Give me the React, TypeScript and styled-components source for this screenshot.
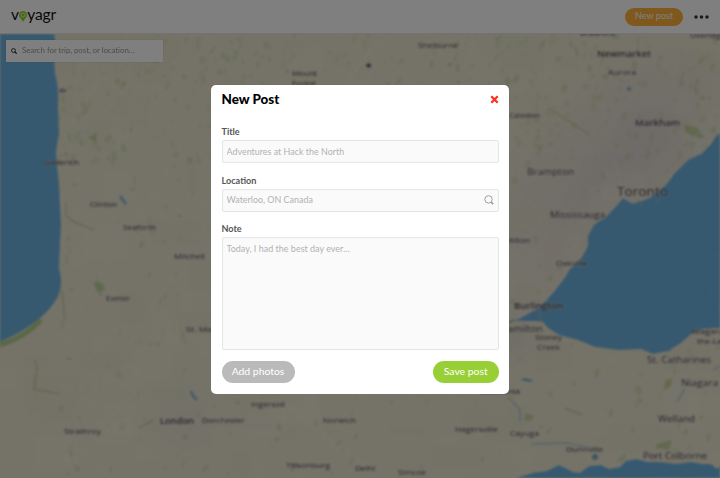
import React from 'react';
import styled, { createGlobalStyle } from 'styled-components';

const GlobalStyle = createGlobalStyle`
  * { box-sizing: border-box; }
  html, body { margin: 0; overflow: hidden; }
  body, button, input, textarea { font-family: Lato, "Open Sans", sans-serif; }
`;

const Page = styled.div`
  position: relative;
  display: flex;
  flex-direction: column;
  width: 720px;
  height: 478px;
  overflow: hidden;
  background: #fff;
`;

const TopBar = styled.header`
  display: flex;
  align-items: center;
  justify-content: space-between;
  flex: none;
  height: 34px;
  padding: 0 11px;
  background: #fff;
  border-bottom: 1px solid #e4e4e4;
`;

const Logo = styled.div`
  display: flex;
  align-items: baseline;
  height: 21px;
  font-size: 15.5px;
  line-height: 17px;
  letter-spacing: -0.15px;
  color: #111;
  svg { width: 8px; height: 11px; align-self: flex-start; margin: 5px 0.5px 0 0; }
`;

const Actions = styled.div`
  display: flex;
  align-items: center;
  gap: 11px;
  svg { width: 15px; height: 4px; }
`;

const NewPost = styled.button`
  width: 58px;
  height: 18px;
  padding: 0 0 2px;
  border: 0;
  border-radius: 9px;
  background: #ffb03a;
  color: #fff;
  font-size: 9px;
  line-height: 16px;
`;

const MapArea = styled.main`
  position: relative;
  flex: 1;
  overflow: hidden;
`;

const MapDrawing = styled.svg`
  display: block;
  width: 720px;
  height: 444px;
`;

const MapSearch = styled.div`
  position: absolute;
  top: 6px;
  left: 6px;
  display: flex;
  align-items: center;
  gap: 5px;
  width: 157px;
  height: 22px;
  padding: 0 5px;
  background: #fff;
  box-shadow: 0 0 1px rgba(0, 0, 0, 0.2);
  svg { width: 6px; height: 6px; flex: none; }
`;

const SearchInput = styled.input`
  flex: 1;
  min-width: 0;
  padding: 0 0 2px;
  border: 0;
  outline: 0;
  background: transparent;
  font-size: 8px;
  letter-spacing: -0.1px;
  &::placeholder { color: #999; opacity: 1; }
`;

const Overlay = styled.div`
  position: absolute;
  inset: 0;
  display: flex;
  align-items: center;
  justify-content: center;
  background: rgba(0, 0, 0, 0.5);
`;

const Dialog = styled.section`
  display: flex;
  flex-direction: column;
  width: 298px;
  height: 309px;
  padding: 6px 10.5px 10.5px;
  border-radius: 5px;
  background: #fff;
`;

const DialogHeader = styled.header`
  display: flex;
  align-items: center;
  justify-content: space-between;
  height: 17px;
  margin-bottom: 18.5px;
  svg { display: block; width: 9px; height: 9px; }
`;

const Title = styled.h1`
  margin: 0;
  font-size: 13.4px;
  line-height: 17px;
  font-weight: 900;
  color: #000;
`;

const Close = styled.button`
  padding: 0;
  border: 0;
  background: none;
`;

const Field = styled.label`
  display: flex;
  flex-direction: column;
  gap: 2px;
  margin-bottom: 11.5px;
`;

const FieldName = styled.span`
  font-size: 9.1px;
  line-height: 12px;
  font-weight: 700;
  color: #55565a;
`;

const FieldBox = styled.span<{ $tall?: boolean }>`
  display: flex;
  align-items: center;
  height: ${({ $tall }) => ($tall ? 112.5 : 23)}px;
  padding: ${({ $tall }) => ($tall ? '5px 4px' : '0 4px')};
  border: 1px solid #e5e5e5;
  border-radius: 2px;
  background: #fafafa;
  svg { flex: none; width: 10px; height: 10px; }
`;

const TextInput = styled.input`
  flex: 1;
  min-width: 0;
  padding: 0 0 1px;
  border: 0;
  outline: 0;
  background: transparent;
  font-size: 8.95px;
  &::placeholder { color: #b2b2b2; opacity: 1; }
`;

const TextArea = styled.textarea`
  flex: 1;
  height: 100%;
  padding: 0;
  border: 0;
  outline: 0;
  resize: none;
  background: transparent;
  font-size: 9px;
  line-height: 11px;
  &::placeholder { color: #b2b2b2; opacity: 1; }
`;

const Buttons = styled.footer`
  display: flex;
  justify-content: space-between;
  margin-top: -0.5px;
`;

const Pill = styled.button<{ $primary?: boolean }>`
  width: ${({ $primary }) => ($primary ? 65.5 : 73)}px;
  height: 22.5px;
  padding: 0 0 1px;
  border: 0;
  border-radius: 12px;
  background: ${({ $primary }) => ($primary ? '#99cf36' : '#bababa')};
  color: #fff;
  font-size: 10.4px;
`;

// Small seeded generator so that the terrain is the same on every render.
function seeded(seed: number) {
  let s = seed;
  return () => {
    s = (s * 1664525 + 1013904223) % 4294967296;
    return s / 4294967296;
  };
}

const rand = seeded(41);
const woods = Array.from({ length: 900 }, () => {
  const north = rand() < 0.5;
  return {
    x: 55 + rand() * 665,
    y: 34 + rand() * (north ? 130 : 440),
    rx: 0.7 + rand() * 2.2,
    ry: 1 + rand() * 4,
    a: rand() * 60 - 20,
    o: 0.08 + rand() * 0.32,
  };
});
const fields = Array.from({ length: 180 }, () => ({
  x: rand() * 720,
  y: 34 + rand() * 440,
  w: 10 + rand() * 40,
  h: 8 + rand() * 30,
  light: rand() > 0.5,
}));
const lanes = Array.from({ length: 90 }, (_, i) => {
  const x = rand() * 800 - 40;
  const y = 34 + rand() * 440;
  const a = ((i % 2 ? 28 : -62) + rand() * 14) * (Math.PI / 180);
  const l = 80 + rand() * 180;
  return `M${x.toFixed(1)} ${y.toFixed(1)}l${(Math.cos(a) * l).toFixed(1)} ${(Math.sin(a) * l).toFixed(1)}`;
}).join('');

// name, left edge, baseline, drawn width, size, weight
type Place = [string, number, number, number, number, number];
const places: Place[] = [
  ['Goderich', 44, 165, 35, 8, 400],
  ['Clinton', 90, 207, 27, 7.5, 400],
  ['Seaforth', 123, 229.5, 33, 7.5, 400],
  ['Mitchell', 174, 258.5, 31, 7.5, 400],
  ['Exeter', 106, 301, 24, 7.5, 400],
  ['St. Marys', 186, 332, 39, 8, 400],
  ['Strathroy', 64, 433.5, 37, 7.5, 400],
  ['London', 160, 424, 34, 9, 600],
  ['Dorchester', 202, 423, 43, 7.5, 400],
  ['Ingersoll', 251, 407, 34, 7.5, 400],
  ['Tillsonburg', 286, 467.5, 44, 7.5, 400],
  ['Delhi', 355, 470.5, 20, 7.5, 400],
  ['Norwich', 323, 423, 33, 7.5, 400],
  ['Simcoe', 398, 475, 28, 7.5, 400],
  ['Hagersville', 455, 431.5, 43, 7.5, 400],
  ['Cayuga', 510, 436, 29, 7.5, 400],
  ['Dunnville', 566, 452, 37, 7.5, 400],
  ['Port Colborne', 643, 459, 64, 9, 500],
  ['Welland', 658, 422, 37, 9, 500],
  ['Niagara Falls', 681, 386, 61, 9.5, 500],
  ['St. Catharines', 647, 363, 64, 9, 500],
  ['Niagara-on', 691, 333.5, 47, 8, 400],
  ['the-Lake', 697, 343.5, 34, 8, 400],
  ['Stoney', 535, 340, 27, 7.5, 400],
  ['Creek', 537, 350, 23, 7.5, 400],
  ['Hamilton', 500, 332, 43, 9, 500],
  ['Burlington', 514, 309, 49, 9, 600],
  ['Oakville', 556, 266, 32, 8, 400],
  ['Milton', 505, 243, 25, 7.5, 400],
  ['Mississauga', 550, 217.5, 55, 9.5, 500],
  ['Toronto', 617, 196, 51, 13, 500],
  ['Brampton', 527, 174.5, 47, 9.5, 500],
  ['Caledon', 509, 118, 31, 7.5, 400],
  ['Markham', 635, 126, 45, 9.5, 600],
  ['Aurora', 608, 74.5, 28, 7.5, 400],
  ['Newmarket', 597, 56.5, 54, 9.5, 600],
  ['Bradford', 580, 35.5, 35, 7.5, 400],
  ['Uxbridge', 690, 38, 35, 8, 400],
  ['Shelburne', 418, 47.5, 40, 7.5, 400],
  ['Mount', 292, 76, 25, 8, 400],
  ['Forest', 292, 85.5, 24, 8, 400],
  ['Caledonia', 480, 394, 40, 7.5, 400],
];

const huron =
  'M0 34H54Q56 41 54 50L55 74Q59 86 58 105L59 134L56 150L57 166L59 184L61 224Q60 243 59 268Q64 285 57 298Q50 311 35 322Q21 333 0 342Z';
const ontario =
  'M720 133L716 136L711 144L701 154L688 160L675 173L666 185L650 198L633 204L623 198L618 204L607 216L594 225L588 236L588 246L582 257L569 270L566 276L557 288L547 300L538 308L528 314L519 319L512 321L537 321L543 322L548 328L559 335L578 340L595 347L619 350L641 349L653 354L668 351L681 343L690 335L703 329L720 328Z';
const erie =
  'M516 478L533 473L547 471L559 465L573 472L580 473L589 466L601 465L609 469L620 467L626 461L636 459L648 462L661 462L676 464L691 462L703 464L711 464L717 469L720 466V478Z';

function RegionMap() {
  return (
    <MapDrawing viewBox="0 34 720 444" aria-label="Map of southern Ontario">
      <defs>
        <filter id="soft" x="-5%" y="-5%" width="110%" height="110%">
          <feGaussianBlur stdDeviation="0.8" />
        </filter>
        <filter id="haze" x="-20%" y="-20%" width="140%" height="140%">
          <feGaussianBlur stdDeviation="14" />
        </filter>
      </defs>
      <rect y="34" width="720" height="444" fill="#ebe7d0" />
      <g filter="url(#haze)">
        <path d="M500 180L620 60H720V150L610 230L530 310L500 270Z" fill="#e2dcd2" opacity=".7" />
        <path d="M540 230L620 120L670 100L680 160Z" fill="#dcd5d0" />
        <ellipse cx="184" cy="424" rx="22" ry="14" fill="#ddd7d4" opacity=".8" />
        <ellipse cx="510" cy="336" rx="22" ry="15" fill="#d9d3d1" />
      </g>
      <g filter="url(#soft)">
        {fields.map((f, i) => (
          <rect key={i} x={f.x} y={f.y} width={f.w} height={f.h} fill={f.light ? '#f3efdb' : '#e0e0c6'} opacity=".22" />
        ))}
        <path d={lanes} fill="none" stroke="#fbf5e6" strokeWidth=".8" opacity=".35" />
        {woods.map((w, i) => (
          <ellipse key={i} cx={w.x} cy={w.y} rx={w.rx} ry={w.ry} transform={`rotate(${w.a} ${w.x} ${w.y})`} fill="#b0cc8c" opacity={w.o} />
        ))}
        <g fill="none" stroke="#a9c48a" strokeWidth="2" opacity=".5">
          <path d="M66 202V216L74 222L94 230M35 360L37 370L34 389L60 394M97 279L101 296M62 290L65 320M139 428L154 420M565 408L582 415M548 108L572 123L590 135" />
        </g>
        <path d="M0 345Q24 338 41 320" fill="none" stroke="#a6c97a" strokeWidth="5" opacity=".8" />
        <g fill="#a9c77e">
          <path d="M684 124L698 128L704 138L694 137L685 132ZM657 444L672 440L669 450L655 448ZM526 413L534 416L531 421L524 420ZM93 282L103 283L105 290L97 292ZM88 138L97 132L96 142ZM665 381L672 378L671 386L664 391Z" opacity=".6" />
        </g>
        <g fill="none" stroke="#eee2e2" strokeWidth="1.2" opacity=".5">
          <path d="M480 346L540 302L600 235L660 158L720 120M118 426H280L420 390L510 327M590 34L600 90L614 158L622 190M642 460L675 400L683 348L720 380M500 360L570 384L647 381" />
        </g>
        <path d="M120 196L126 204M191 391L193 396L197 400" fill="none" stroke="#78b2d2" strokeWidth="3" opacity=".8" />
        <path d="M67 358L72 359M512 401L520 410L520 422M531 444L568 443L590 448M720 366L713 370M677 402L685 388M671 348L669 352" fill="none" stroke="#8bbad0" strokeWidth="1.6" opacity=".65" />
        <ellipse cx="527" cy="380" rx="6" ry="1.2" transform="rotate(8 527 380)" fill="#75aeca" />
        <ellipse cx="595" cy="457" rx="3" ry="3" fill="#75aeca" />
        <ellipse cx="629" cy="89" rx="2" ry="2" fill="#82aaca" />
        <path d={huron} fill="#6db2e0" />
        <path d={ontario} fill="#6db2e0" />
        <path d={erie} fill="#6db2e0" />
        <path d="M637 200L643 205M655 203L660 199M538 309L542 322" stroke="#a9bfa0" strokeWidth="2" opacity=".55" />
        <path d="M720 247L688 262L720 318" fill="none" stroke="#5c91ba" strokeWidth=".7" opacity=".3" />
        <path d="M508 323L514 320" stroke="#9bbd7c" strokeWidth="2" />
      </g>
      <g filter="url(#soft)" fontFamily="Open Sans, sans-serif" fill="#343344" stroke="#e6ddd6" strokeOpacity=".4" strokeWidth="1.6" paintOrder="stroke">
        {places.map(([name, x, y, width, size, weight]) => (
          <text key={name} x={x} y={y} fontSize={size} fontWeight={weight} textLength={width} lengthAdjust="spacingAndGlyphs">
            {name}
          </text>
        ))}
        <ellipse cx="368.5" cy="65.5" rx="2.5" ry="2" fill="#545784" />
        <ellipse cx="62.5" cy="90.5" rx="4" ry="2" fill="#a19eb4" />
      </g>
    </MapDrawing>
  );
}

export default function App() {
  return (
    <>
      <GlobalStyle />
      <Page>
        <TopBar>
          <Logo aria-label="voyagr">
            v
            <svg viewBox="0 0 8 11">
              <path d="M4 0C1.7 0 0 1.7 0 4C0 6.5 2.2 7.4 4 11C5.8 7.4 8 6.5 8 4C8 1.7 6.3 0 4 0Z" fill="#8bd51f" />
              <circle cx="4" cy="4" r="2" fill="none" stroke="#e6f4ca" strokeWidth="1" />
            </svg>
            yagr
          </Logo>
          <Actions>
            <NewPost>New post</NewPost>
            <svg viewBox="0 0 15 4" fill="#333">
              <circle cx="2" cy="2" r="1.75" />
              <circle cx="7.5" cy="2" r="1.75" />
              <circle cx="13" cy="2" r="1.75" />
            </svg>
          </Actions>
        </TopBar>
        <MapArea>
          <RegionMap />
          <MapSearch>
            <svg viewBox="0 0 6 6" fill="none" stroke="#222">
              <circle cx="2.5" cy="2.5" r="1.95" strokeWidth=".9" />
              <path d="M4 4L5.7 5.7" strokeWidth="1.2" />
            </svg>
            <SearchInput placeholder="Search for trip, post, or location…" />
          </MapSearch>
        </MapArea>
        <Overlay>
          <Dialog role="dialog" aria-label="New Post">
            <DialogHeader>
              <Title>New Post</Title>
              <Close aria-label="Close">
                <svg viewBox="0 0 9 9">
                  <path d="M1.3 1.3L7.7 7.7M7.7 1.3L1.3 7.7" stroke="#fb2f22" strokeWidth="2.3" />
                </svg>
              </Close>
            </DialogHeader>
            <Field>
              <FieldName>Title</FieldName>
              <FieldBox><TextInput placeholder="Adventures at Hack the North" /></FieldBox>
            </Field>
            <Field>
              <FieldName>Location</FieldName>
              <FieldBox>
                <TextInput placeholder="Waterloo, ON Canada" />
                <svg viewBox="0 0 10 10" fill="none" stroke="#a0a0a0">
                  <circle cx="4.5" cy="4.4" r="3.7" strokeWidth="1" />
                  <path d="M6.8 6.8L9.2 9.2" strokeWidth="1.7" />
                </svg>
              </FieldBox>
            </Field>
            <Field>
              <FieldName>Note</FieldName>
              <FieldBox $tall><TextArea placeholder="Today, I had the best day ever…" /></FieldBox>
            </Field>
            <Buttons>
              <Pill>Add photos</Pill>
              <Pill $primary>Save post</Pill>
            </Buttons>
          </Dialog>
        </Overlay>
      </Page>
    </>
  );
}
